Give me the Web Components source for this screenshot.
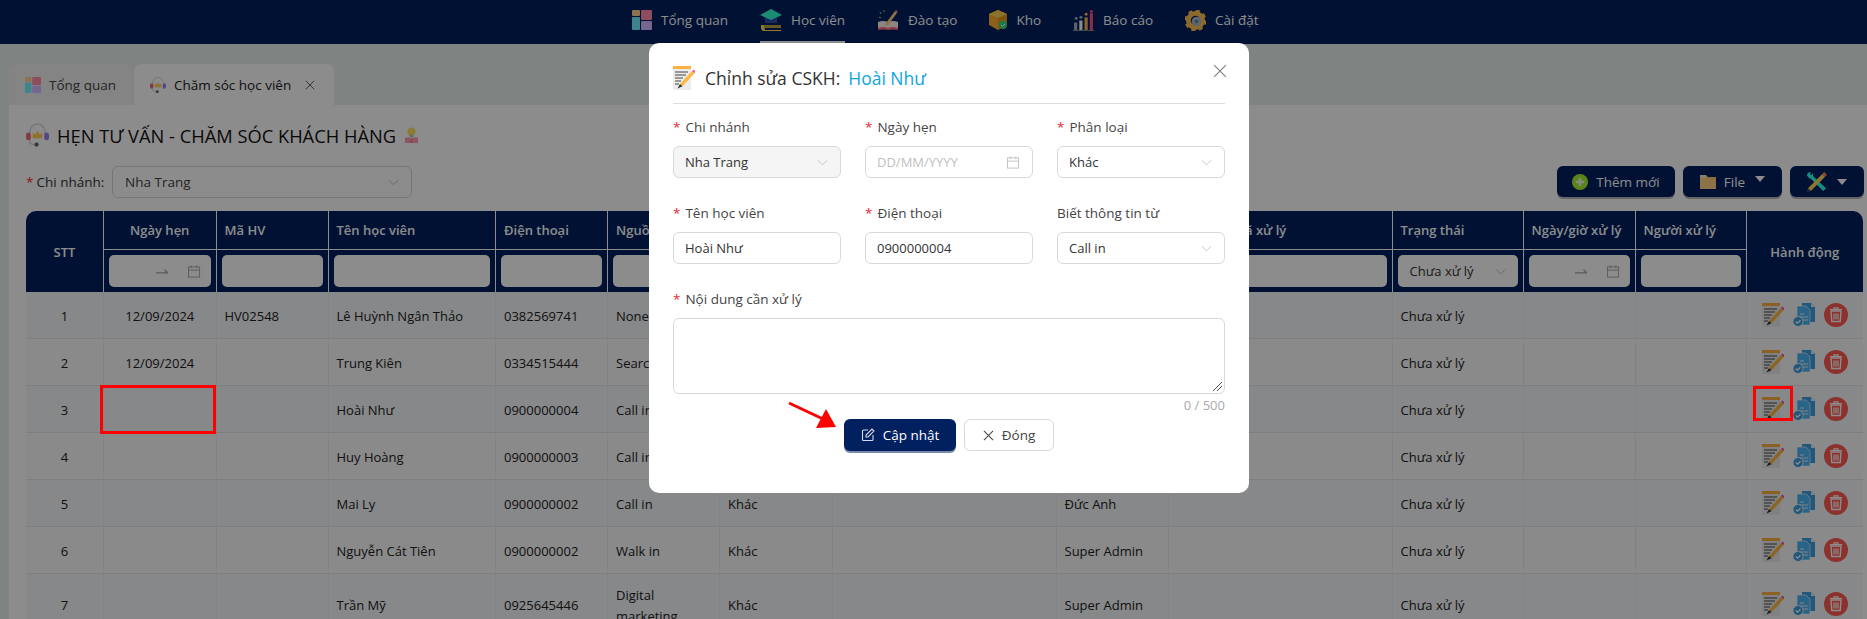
<!DOCTYPE html>
<html lang="vi">
<head>
<meta charset="utf-8">
<title>CSKH</title>
<style>
  html, body { margin: 0; height: 619px; overflow: hidden; background: #e8eeec; }
  body { font: 13px "Open Sans", "Noto Sans", sans-serif; color: #222; position: relative; }
</style>
</head>
<body>
<top-nav></top-nav>
<tab-strip></tab-strip>
<care-panel></care-panel>
<page-mask></page-mask>
<edit-modal></edit-modal>
<red-marks></red-marks>

<script>
const ICONS = {
  dash: `<svg viewBox="0 0 20 20"><rect width="8" height="6" rx="1" fill="#ffd090"/><rect x="9" width="11" height="10" rx="1" fill="#ff8fa8"/><rect y="7" width="8" height="13" rx="1" fill="#70f0ff"/><rect x="9" y="11" width="11" height="9" rx="1" fill="#d8b8ff"/></svg>`,
  cap: `<svg viewBox="0 0 22 24"><path d="M5 8h12v7H5z" fill="#2a4cb0"/><path d="M11 1 22 7l-11 5L0 7z" fill="#30ffd8"/><path d="M1 17h20v3H4a1 1 0 0 1 0 2h17v1H3q-2-1-2-3z" fill="#ffe050"/><path d="M4 17h17v3H4z" fill="#b8a040"/></svg>`,
  study: `<svg viewBox="0 0 22 22"><path d="M1 13q5-2 10 0 5-2 10 0v7q-5-2-10 0-5-2-10 0z" fill="#fff4ee"/><path d="M1 19q5-2 10 0 5-2 10 0v2q-5-1-10 0-5-1-10 0z" fill="#ff6a80"/><path d="M9 14 18 2l2 2-9 12-3 1z" fill="#ffd080"/><path d="M18 2l1-1 2 2-1 1z" fill="#ff8a70"/><path d="M3 3l1 2M7 1v2M2 8l2 1" stroke="#70e8a0" stroke-width="1"/></svg>`,
  box: `<svg viewBox="0 0 18 20"><path d="M9 0 18 4v11l-9 5-9-5V4z" fill="#ffb030"/><path d="M9 8 18 4v11l-9 5z" fill="#e89a18"/><path d="M9 0 18 4 9 8 0 4z" fill="#ffd050"/><circle cx="14" cy="15" r="4" fill="#30e080"/><path d="m12 15 1.500 1.500L16 14" stroke="#fff" stroke-width="1" fill="none"/></svg>`,
  chart: `<svg viewBox="0 0 20 20"><rect x="1" y="12" width="3" height="7" fill="#a8b4c4"/><rect x="6" y="10" width="3" height="9" fill="#fff"/><rect x="11" y="7" width="3" height="12" fill="#ffb850"/><rect x="16" y="3" width="3" height="16" fill="#ff5080"/><circle cx="3" cy="8" r="1.400" fill="#a8b4c4"/><circle cx="7.500" cy="7" r="1.400" fill="#a8b4c4"/><circle cx="12.500" cy="4" r="1.400" fill="#ffb850"/><circle cx="17.500" cy="1.400" r="1.400" fill="#ff5080"/><rect y="19" width="20" height="1" fill="#888"/></svg>`,
  gear: `<svg viewBox="0 0 22 22"><circle cx="11" cy="11" r="7.500" fill="none" stroke="#ffc050" stroke-width="5"/><circle cx="11" cy="11" r="10" fill="none" stroke="#ffc050" stroke-width="3" stroke-dasharray="4.200 3.650"/><circle cx="12" cy="12" r="5" fill="#a8bcd0"/><circle cx="12" cy="12" r="1.800" fill="#6a7c8e"/></svg>`,
  head: `<svg viewBox="0 0 24 25"><path d="M4 11V9a8 8 0 0 1 16 0v2" fill="none" stroke="#d6d8dc" stroke-width="1.500"/><path d="M4 17v3q0 2 5 2.500" fill="none" stroke="#d6d8dc" stroke-width="1.500"/><rect x="0" y="10" width="5" height="8" rx="2.500" fill="#f06a80"/><rect x="19" y="10" width="5" height="8" rx="2.500" fill="#a080f0"/><path d="M7 16V10l2.500 2L12 8l2.500 4 2.500-2v6z" fill="#ffd050"/><circle cx="11" cy="22.500" r="2.200" fill="#5d6470"/></svg>`,
  bulb: `<svg viewBox="0 0 16 18"><circle cx="8" cy="5" r="4.500" fill="#ffe060"/><rect x="6" y="8" width="4" height="3" fill="#b8c0ca"/><path d="M1 11h5l2 1.500 2-1.500h5v6H1z" fill="#ff9cb0"/><path d="M8 12.500V17" stroke="#d86a80"/></svg>`,
  note: `<svg viewBox="0 0 22 24"><path d="M0 2h18v22H0z" fill="#ececec"/><path d="M0 0h18v3H0z" fill="#ffb040"/><path d="M2 6h13M2 9h11M2 12h8M2 15h6M2 18h4" stroke="#444" stroke-width="1.200"/><path d="m7 18 12-13 2.500 2.200L9.500 20.200z" fill="#ffb840"/><path d="m19 5 1.400-1.600 1.600 1.500v2.300z" fill="#ff4aa0"/><path d="m7 18 2.500 2.200-5 2.300z" fill="#333"/></svg>`,
  docs: `<svg viewBox="0 0 22 24"><path d="M9 0h9l4 4v15H9z" fill="#3d9fe0"/><path d="M18 0l4 4h-4z" fill="#e0f0fa"/><path d="M4 3h9l4 4v15H4z" fill="#4cb5f5" stroke="#fff" stroke-width=".6"/><path d="M7 11h4M7 14h8M7 17h8" stroke="#e4f3fd" stroke-width="1"/><circle cx="5" cy="18.500" r="5" fill="#3d9fe0" stroke="#fff" stroke-width=".8"/><path d="m2.800 18.500 1.700 1.700 3-3" fill="none" stroke="#fff" stroke-width="1.300"/></svg>`,
  trash: `<svg viewBox="0 0 24 24"><circle cx="12" cy="12" r="12" fill="#ff5a50"/><path d="M7 8h10l-.8 10.500H7.800z" fill="none" stroke="#fff" stroke-width="1.400"/><path d="M6 6.500h12M10 6V4.800h4V6M10 10.500v6M12 10.500v6M14 10.500v6" fill="none" stroke="#fff" stroke-width="1.200"/></svg>`,
  plus: `<svg viewBox="0 0 16 16"><circle cx="8" cy="8" r="8" fill="#a0f030"/><path d="M8 4v8M4 8h8" stroke="#f2f8e8" stroke-width="2.400"/></svg>`,
  folder: `<svg viewBox="0 0 16 16"><path d="M0 1h6l2 2h8v2H0z" fill="#ffc850"/><path d="M0 4h16v11H0z" fill="#ffd080"/><path d="M0 1h6v3H0z" fill="#f0f4f6" opacity=".8"/></svg>`,
  tools: `<svg viewBox="0 0 21 21"><path d="M4 2 20 17l-3 3L2 5z" fill="#30ffe8"/><path d="M0 4a4 4 0 0 1 4-4L3 3l2 1 1-3a4 4 0 0 1-3 6z" fill="#30ffe8"/><path d="M16 2 1 17l3 3L19 5z" fill="#ffd860"/><path d="M16 2l2-2 3 3-2 2z" fill="#ff8060"/><path d="m1 17-1 4 4-1z" fill="#555"/></svg>`,
  cal: `<svg viewBox="0 0 14 14" fill="none" stroke="currentColor"><rect x=".5" y="2" width="12" height="11"/><path d="M.5 5.500h12M3.500 .5v3M9.500 .5v3"/></svg>`,
  down: `<svg viewBox="0 0 12 7" fill="none" stroke="currentColor"><path d="m1 1 5 5 5-5"/></svg>`,
  x: `<svg viewBox="0 0 12 12" fill="none" stroke="currentColor" stroke-width="1.100"><path d="m1 1 10 10M11 1 1 11"/></svg>`,
  pen: `<svg viewBox="0 0 14 14" fill="none" stroke="currentColor" stroke-width="1.100"><path d="M7 2H2.500A1 1 0 0 0 1.500 3v8.500a1 1 0 0 0 1 1h8.500a1 1 0 0 0 1-1V7"/><path d="M5 9V7l6-6 2 2-6 6z"/></svg>`,
  caret: `<svg viewBox="0 0 10 6"><path d="M0 0h10L5 6z" fill="currentColor"/></svg>`,
  arrow: `<svg viewBox="0 0 10 6" fill="none" stroke="currentColor"><path d="M0 4.500h10L7 2"/></svg>`
}

class AppIcon extends HTMLElement {
  constructor() {
    super()
    this.attachShadow({ mode: 'open' })
  }

  connectedCallback() {
    const w = this.getAttribute('w') || 16
    const h = this.getAttribute('h') || w
    this.shadowRoot.innerHTML = `
      <style>
        :host { display: inline-flex; flex: none; width: ${w}px; height: ${h}px; }
        svg { width: 100%; height: 100%; display: block; }
      </style>
      ${ICONS[this.getAttribute('name')] || ''}
    `
  }
}
customElements.define('app-icon', AppIcon)

class TopNav extends HTMLElement {
  constructor() {
    super()
    this.attachShadow({ mode: 'open' })
  }

  connectedCallback() {
    const items = [
      ['dash', 'Tổng quan', 20, 20, 0],
      ['cap', 'Học viên', 22, 24, 1],
      ['study', 'Đào tạo', 22, 22, 0],
      ['box', 'Kho', 18, 20, 0],
      ['chart', 'Báo cáo', 21, 21, 0],
      ['gear', 'Cài đặt', 21, 21, 0]
    ]
    this.shadowRoot.innerHTML = `
      <style>
        :host { display: flex; height: 44px; background: #002060; padding-left: 632px; gap: 32px; box-sizing: border-box; color: #fff; font-size: 13.500px; }
        .item { display: flex; align-items: center; gap: 9px; height: 44px; box-sizing: border-box; padding-bottom: 4px; }
        .on { border-bottom: 3px solid #fff; padding-bottom: 1px; }
      </style>
      ${items.map(i => `<div class="item ${i[4] ? 'on' : ''}"><app-icon name="${i[0]}" w="${i[2]}" h="${i[3]}"></app-icon><span>${i[1]}</span></div>`).join('')}
    `
  }
}
customElements.define('top-nav', TopNav)

class TabStrip extends HTMLElement {
  constructor() {
    super()
    this.attachShadow({ mode: 'open' })
  }

  connectedCallback() {
    this.shadowRoot.innerHTML = `
      <style>
        :host { display: flex; gap: 1px; padding: 20px 0 0 9px; font-size: 13.500px; }
        .tab { display: flex; align-items: center; height: 41px; border-radius: 8px 8px 0 0; padding: 0 16px; gap: 8px; box-sizing: border-box; background: #f0f1f1; color: #444; }
        .tab.on { background: #fff; color: #222; }
        .close { margin-left: 6px; color: #555; display: flex; }
      </style>
      <div class="tab" style="width:124px"><app-icon name="dash" w="16" h="20"></app-icon>Tổng quan</div>
      <div class="tab on" style="width:200px"><app-icon name="head" w="16" h="18"></app-icon>Chăm sóc học viên<span class="close"><app-icon name="x" w="10"></app-icon></span></div>
    `
  }
}
customElements.define('tab-strip', TabStrip)

class HeadBtn extends HTMLElement {
  constructor() {
    super()
    this.attachShadow({ mode: 'open' })
  }

  connectedCallback() {
    this.shadowRoot.innerHTML = `
      <style>
        :host { display: flex; align-items: center; justify-content: center; gap: 8px; height: 31px; background: #002060; color: #fff; border-radius: 6px; box-shadow: 0 2px 0 rgba(0,0,0,.28); font-size: 13.500px; box-sizing: border-box; }
      </style>
      <slot></slot>
    `
  }
}
customElements.define('head-btn', HeadBtn)

class CarePanel extends HTMLElement {
  constructor() {
    super()
    this.attachShadow({ mode: 'open' })
  }

  connectedCallback() {
    this.shadowRoot.innerHTML = `
      <style>
        :host { display: block; margin-left: 9px; background: #fff; padding: 18px 3px 0 17px; height: 514px; box-sizing: border-box; overflow: hidden; }
        h1 { display: flex; align-items: center; gap: 8px; margin: 0 0 19px; height: 24px; font-size: 18.300px; font-weight: 400; color: #111; }
        .bar { display: flex; justify-content: space-between; height: 33px; margin-bottom: 12px; }
        .branch { display: flex; align-items: flex-start; font-size: 13.500px; color: #333; }
        .branch label { width: 86px; line-height: 32px; flex: none; }
        i { color: #f5222d; font-style: normal; margin-right: 3px; }
        .select { width: 300px; height: 32px; box-sizing: border-box; border: 1px solid #d9d9d9; border-radius: 6px; display: flex; align-items: center; justify-content: space-between; padding: 0 12px; color: #444; }
        .select app-icon { color: #bbb; }
        .btns { display: flex; gap: 8px; }
      </style>
      <h1><app-icon name="head" w="23" h="24"></app-icon><span>HẸN TƯ VẤN - CHĂM SÓC KHÁCH HÀNG</span><app-icon name="bulb" w="15" h="17"></app-icon></h1>
      <div class="bar">
        <div class="branch"><label><i>*</i>Chi nhánh:</label><div class="select">Nha Trang<app-icon name="down" w="11" h="7"></app-icon></div></div>
        <div class="btns">
          <head-btn style="width:118px"><app-icon name="plus" w="16"></app-icon><span>Thêm mới</span></head-btn>
          <head-btn style="width:99px"><app-icon name="folder" w="16"></app-icon><span>File</span><app-icon name="caret" w="10" h="6" style="margin:-6px 0 0 2px"></app-icon></head-btn>
          <head-btn style="width:74px"><app-icon name="tools" w="20" h="20"></app-icon><app-icon name="caret" w="10" h="6" style="margin-left:2px"></app-icon></head-btn>
        </div>
      </div>
      <care-table></care-table>
    `
  }
}
customElements.define('care-panel', CarePanel)

class CareTable extends HTMLElement {
  constructor() {
    super()
    this.attachShadow({ mode: 'open' })
  }

  connectedCallback() {
    const widths = [77, 112.5, 112, 167.5, 112, 112, 112.5, 224, 112, 224, 131, 112, 111, 117.5]
    const heads = [
      ['Ngày hẹn', 'c', 'date'], ['Mã HV', '', 'in'], ['Tên học viên', '', 'in'], ['Điện thoại', '', 'in'],
      ['Nguồn', '', 'in'], ['', '', 'in'], ['', '', 'in'], ['', '', 'in'], ['Nội dung đã xử lý', '', 'in'],
      ['Trạng thái', '', 'sel'], ['Ngày/giờ xử lý', '', 'date'], ['Người xử lý', '', 'in']
    ]
    const filter = t => {
      if (t === 'date') return `<div class="f date"><app-icon name="arrow" w="12" h="8"></app-icon><app-icon name="cal" w="13"></app-icon></div>`
      if (t === 'sel') return `<div class="f sel"><span>Chưa xử lý</span><app-icon name="down" w="11" h="7"></app-icon></div>`
      return `<div class="f"></div>`
    }
    const rows = [
      ['12/09/2024', 'HV02548', 'Lê Huỳnh Ngân Thảo', '0382569741', 'None', '', ''],
      ['12/09/2024', '', 'Trung Kiên', '0334515444', 'Search', '', ''],
      ['', '', 'Hoài Như', '0900000004', 'Call in', '', ''],
      ['', '', 'Huy Hoàng', '0900000003', 'Call in', '', ''],
      ['', '', 'Mai Ly', '0900000002', 'Call in', 'Khác', 'Đức Anh'],
      ['', '', 'Nguyễn Cát Tiên', '0900000002', 'Walk in', 'Khác', 'Super Admin'],
      ['', '', 'Trần Mỹ', '0925645446', 'Digital marketing', 'Khác', 'Super Admin']
    ]
    this.shadowRoot.innerHTML = `
      <style>
        :host { display: block; width: 1837px; }
        table { border-collapse: separate; border-spacing: 0; table-layout: fixed; width: 1837px; font-size: 13px; color: #222; }
        th { background: #002060; color: #fff; font-weight: 600; text-align: left; padding: 0 8px; height: 38px; border-left: 1px solid #fff; box-sizing: border-box; }
        th.c { text-align: center; }
        th.first { border-left: 0; border-top-left-radius: 10px; }
        th.last { border-top-right-radius: 10px; }
        tr.r2 th { height: 43px; padding: 0 5px 0 5px; border-top: 1px solid #fff; vertical-align: middle; font-weight: 400; }
        .f { height: 32px; background: #fff; border-radius: 5px; box-sizing: border-box; display: flex; align-items: center; color: #a5a5a5; }
        .date { justify-content: flex-end; gap: 20px; padding-right: 10px; }
        .sel { justify-content: space-between; padding: 0 12px; color: #333; }
        .sel app-icon { color: #bbb; }
        td { height: 47px; padding: 2px 8px 0; box-sizing: border-box; border-left: 1px solid #eee; border-bottom: 1px solid #e6e6e6; background: #fbfbfb; line-height: 21px; }
        tr:nth-child(odd) td { background: #f6f7f9; }
        td.c { text-align: center; }
        td:first-child { border-left: 0; }
        .acts { display: flex; align-items: center; gap: 9px; padding-left: 7px; margin-bottom: 3px; }
        tr.tall td { height: 62px; }
      </style>
      <table>
        <colgroup>${widths.map(w => `<col style="width:${w}px">`).join('')}</colgroup>
        <thead>
          <tr>
            <th class="c first" rowspan="2">STT</th>
            ${heads.map(h => `<th class="${h[1]}">${h[0]}</th>`).join('')}
            <th class="c last" rowspan="2">Hành động</th>
          </tr>
          <tr class="r2">${heads.map(h => `<th>${filter(h[2])}</th>`).join('')}</tr>
        </thead>
        <tbody>
          ${rows.map((r, i) => `
            <tr class="${i === 6 ? 'tall' : ''}">
              <td class="c">${i + 1}</td>
              <td class="c">${r[0]}</td><td>${r[1]}</td><td>${r[2]}</td><td>${r[3]}</td><td>${r[4]}</td>
              <td>${r[5]}</td><td></td><td>${r[6]}</td><td></td>
              <td>Chưa xử lý</td><td></td><td></td>
              <td><div class="acts"><app-icon name="note" w="22" h="24"></app-icon><app-icon name="docs" w="22" h="24"></app-icon><app-icon name="trash" w="24"></app-icon></div></td>
            </tr>`).join('')}
        </tbody>
      </table>
    `
  }
}
customElements.define('care-table', CareTable)

class PageMask extends HTMLElement {
  constructor() {
    super()
    this.attachShadow({ mode: 'open' })
  }

  connectedCallback() {
    this.shadowRoot.innerHTML = `<style>:host { position: fixed; inset: 0; background: rgba(0,0,0,.45); }</style>`
  }
}
customElements.define('page-mask', PageMask)

class FormField extends HTMLElement {
  constructor() {
    super()
    this.attachShadow({ mode: 'open' })
  }

  connectedCallback() {
    const req = this.hasAttribute('req') ? '<i>*</i>' : ''
    this.shadowRoot.innerHTML = `
      <style>
        :host { display: block; }
        label { display: block; height: 19px; line-height: 19px; margin-bottom: 9px; color: #444; font-size: 13.500px; }
        i { color: #f5222d; font-style: normal; margin-right: 5px; }
        .box { display: flex; align-items: center; justify-content: space-between; height: 32px; box-sizing: border-box; padding: 0 12px 0 11px; border: 1px solid #d9d9d9; border-radius: 6px; color: #333; background: #fff; font-size: 13px; }
        :host([off]) .box { background: #f5f5f5; }
        ::slotted(app-icon) { color: #c2c2c2; }
      </style>
      <label>${req}${this.getAttribute('label')}</label>
      <div class="box"><slot></slot></div>
    `
  }
}
customElements.define('form-field', FormField)

class EditModal extends HTMLElement {
  constructor() {
    super()
    this.attachShadow({ mode: 'open' })
  }

  connectedCallback() {
    this.shadowRoot.innerHTML = `
      <style>
        :host { position: fixed; left: 649px; top: 43px; width: 600px; height: 450px; background: #fff; border-radius: 10px; box-sizing: border-box; padding: 20px 24px 0; color: #333; }
        .head { display: flex; align-items: center; height: 30px; padding-bottom: 10px; border-bottom: 1px solid #ddd; font-size: 17.500px; margin-bottom: 14px; color: #333; }
        .head app-icon { margin-right: 10px; }
        .head b { color: #0ea5e0; font-weight: 500; margin-left: 8px; }
        .close { position: absolute; right: 22px; top: 21px; color: #888; }
        .grid { display: grid; grid-template-columns: repeat(3, 1fr); column-gap: 24px; row-gap: 26px; }
        .area { margin-top: 26px; }
        label { display: block; height: 19px; line-height: 19px; margin-bottom: 9px; color: #444; font-size: 13.500px; }
        i { color: #f5222d; font-style: normal; margin-right: 5px; }
        .text { height: 76px; box-sizing: border-box; border: 1px solid #d9d9d9; border-radius: 6px; position: relative; }
        .grip { position: absolute; right: 2px; bottom: 2px; width: 9px; height: 9px; background: linear-gradient(135deg, transparent 45%, #555 45%, #555 52%, transparent 52%, transparent 70%, #555 70%, #555 77%, transparent 77%); }
        .count { text-align: right; color: #aaa; font-size: 13px; line-height: 18px; margin-top: 2px; }
        .acts { display: flex; gap: 8px; padding-left: 171px; margin-top: 5px; }
        .save, .shut { height: 32px; box-sizing: border-box; border-radius: 6px; display: flex; align-items: center; justify-content: center; gap: 8px; font-size: 13.500px; }
        .save { width: 112px; background: #002060; color: #fff; font-weight: 500; box-shadow: 0 2px 0 #7a88a8; }
        .save app-icon { color: #d5dbe8; }
        .shut { width: 90px; border: 1px solid #d9d9d9; color: #444; }
      </style>
      <div class="head"><app-icon name="note" w="22" h="24"></app-icon><span>Chỉnh sửa CSKH:</span><b>Hoài Như</b></div>
      <span class="close"><app-icon name="x" w="14"></app-icon></span>
      <div class="grid">
        <form-field req label="Chi nhánh" off>Nha Trang<app-icon name="down" w="11" h="7"></app-icon></form-field>
        <form-field req label="Ngày hẹn"><span style="color:#bfbfbf">DD/MM/YYYY</span><app-icon name="cal" w="13"></app-icon></form-field>
        <form-field req label="Phân loại">Khác<app-icon name="down" w="11" h="7"></app-icon></form-field>
        <form-field req label="Tên học viên">Hoài Như</form-field>
        <form-field req label="Điện thoại">0900000004</form-field>
        <form-field label="Biết thông tin từ">Call in<app-icon name="down" w="11" h="7"></app-icon></form-field>
      </div>
      <div class="area">
        <label><i>*</i>Nội dung cần xử lý</label>
        <div class="text"><span class="grip"></span></div>
        <div class="count">0 / 500</div>
      </div>
      <div class="acts">
        <div class="save"><app-icon name="pen" w="14"></app-icon>Cập nhật</div>
        <div class="shut"><app-icon name="x" w="11"></app-icon>Đóng</div>
      </div>
    `
  }
}
customElements.define('edit-modal', EditModal)

// the red boxes and arrow sit on top of everything, they mark up the screenshot
class RedMarks extends HTMLElement {
  constructor() {
    super()
    this.attachShadow({ mode: 'open' })
  }

  connectedCallback() {
    this.shadowRoot.innerHTML = `
      <style>
        :host { position: fixed; inset: 0; pointer-events: none; }
        .box { position: absolute; box-sizing: border-box; border: 3px solid #ff0000; }
        svg { position: absolute; left: 785px; top: 398px; }
      </style>
      <div class="box" style="left:100px;top:385px;width:116px;height:49px"></div>
      <div class="box" style="left:1753px;top:386px;width:40px;height:35px"></div>
      <svg width="56" height="34" viewBox="0 0 56 34"><path d="M4 5 38 21" stroke="#ff0000" stroke-width="3"/><path d="M51 29 31 30 41 11z" fill="#ff0000"/></svg>
    `
  }
}
customElements.define('red-marks', RedMarks)
</script>
</body>
</html>
